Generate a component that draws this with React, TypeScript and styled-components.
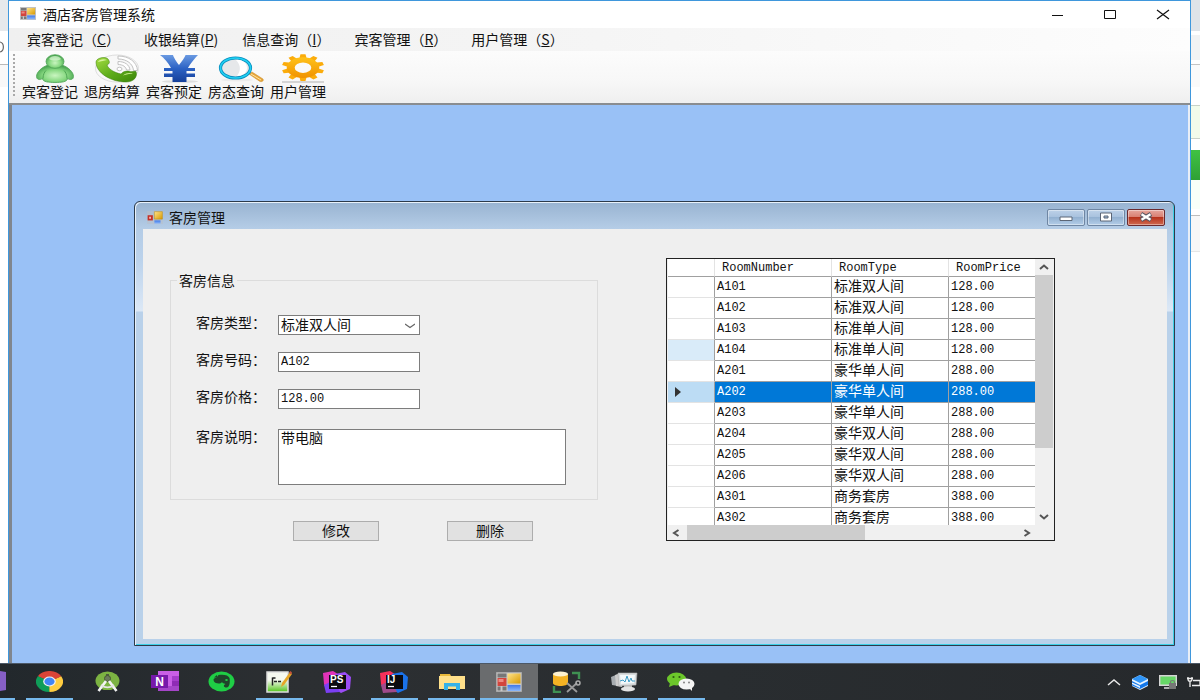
import React from "react";
import styled, { createGlobalStyle, css } from "styled-components";

const ui = `"Noto Sans CJK SC", "Noto Sans", sans-serif`;
const mono = `"Liberation Mono", "Noto Sans CJK SC", monospace`;

const GlobalStyle = createGlobalStyle`
  *, *::before, *::after { box-sizing: border-box; }
  body { margin: 0; font-family: ${ui}; font-size: 14px; line-height: 16px; color: #111; }
  button, input, select, textarea { font: inherit; color: inherit; margin: 0; }
  button { cursor: default; }
  svg { display: block; flex: none; }
`;

/* ---------- desktop ---------- */

const Screen = styled.div`
  display: flex;
  flex-direction: column;
  min-height: 100vh;
  background: #fff;
`;

const Desktop = styled.div`
  display: flex;
  flex: 1;
`;

const LeftSliver = styled.div`
  width: 8px;
  padding-top: 40px;
  background: linear-gradient(
    #e6e9ec 0 31px, #fff 31px 64px, #b9b9b9 64px 65px, #f8f8f8 65px 87px, #fff 87px
  );
`;

const RightSliver = styled.div`
  width: 9px;
  background: linear-gradient(
    #dfe3e8 0 31px, #fff 31px 35px, #f1f2f3 35px 60px, #fff 60px 64px, #c4c4c4 64px 65px,
    #fafafa 65px 87px, #fff 87px 105px, #c8d2c8 105px 106px, #f2fbea 106px 138px, #c8d2c8 138px 139px,
    #fff 139px 150px, #3fc043 150px 152px, #2fa035 180px, #f8fff8 180px 209px, #fff 209px 215px,
    #bdbdbd 215px 216px, #f7f7f7 216px 251px, #e6e6e6 251px 252px, #fff 252px
  );
`;

/* ---------- main window ---------- */

const MainWindow = styled.main`
  display: flex;
  flex-direction: column;
  flex: 1;
  min-width: 0;
  background: #fff;
  border: solid #3f97dc;
  border-width: 1px 1px 0;
`;

const TitleBar = styled.header`
  display: flex;
  align-items: center;
  height: 27px;
  padding: 0 20px 2px 11px;
  gap: 7px;
`;

const Title = styled.h1`
  flex: 1;
  margin: 0;
  font-size: 14px;
  line-height: 20px;
  font-weight: 400;
`;

const CaptionButtons = styled.div`
  display: flex;
  gap: 39px;
`;

const CaptionButton = styled.button`
  display: flex;
  padding: 0;
  border: 0;
  background: none;
`;

const MenuBar = styled.nav`
  display: flex;
  align-items: center;
  height: 23px;
  gap: 24px;
  padding: 0 0 2px 18px;
  background: linear-gradient(90deg, #f0f0f0, #f5f5f5 50%, #fdfdfd);
`;

const MenuItem = styled.button`
  padding: 0;
  border: 0;
  background: none;
  white-space: nowrap;
`;

const ToolBar = styled.div`
  display: flex;
  height: 54px;
  gap: 6px;
  padding: 3px 0 0 4px;
  background: linear-gradient(#fcfcfc, #f7f7f7 60%, #efefef);
  border-bottom: 2px solid #8a8d90;
`;

const Grip = styled.div`
  width: 3px;
  height: 43px;
  background: repeating-linear-gradient(#a9a9a9 0 2px, transparent 2px 4px);
  background-size: 2px 100%;
  background-repeat: no-repeat;
`;

const ToolButton = styled.button`
  display: flex;
  flex-direction: column;
  align-items: center;
  padding: 0;
  border: 0;
  background: none;
  white-space: nowrap;
  svg { margin-left: 10px; }
`;

const ClientArea = styled.div`
  display: flex;
  flex: 1;
  padding: 96px 13px 17px 122px;
  background: #99c1f6;
  border-left: 3px solid #80868e;
  border-right: 2px solid #e9eef6;
`;

/* ---------- child window ---------- */

const ChildWindow = styled.section`
  display: flex;
  flex-direction: column;
  flex: 1;
  min-width: 0;
  padding: 0 7px 6px 8px;
  border: 1px solid #2c3a4a;
  border-radius: 6px 6px 0 0;
  background: linear-gradient(#98b3d1 0, #b4cce6 26px, #bcd3ec 60px, #dce8f6 109px, #b9d1ea 110px);
  box-shadow: inset 1px 1px 0 #e8f1fa, inset -1px -1px 0 #3ccfe6;
`;

const ChildTitleBar = styled.header`
  display: flex;
  align-items: center;
  height: 27px;
  gap: 6px;
  padding: 3px 2px 0 4px;
`;

const ChildTitle = styled.h2`
  flex: 1;
  margin: 0;
  font-size: 14px;
  line-height: 16px;
  font-weight: 400;
`;

const AeroButtons = styled.div`
  display: flex;
  gap: 2px;
`;

const AeroButton = styled.button<{ $close?: boolean }>`
  display: flex;
  align-items: center;
  justify-content: center;
  width: 38px;
  height: 17px;
  padding: 0;
  border: 1px solid #6f86a3;
  border-radius: 2px;
  box-shadow: inset 0 0 0 1px rgba(255, 255, 255, 0.4);
  background: linear-gradient(#bdd1e8, #a9c2de 45%, #93b1d1 50%, #b3cde8);
  ${(p) =>
    p.$close &&
    css`
      border-color: #6b2a2e;
      background: linear-gradient(#e6a79d, #d98173 45%, #b8341d 50%, #cf6a50);
    `}
`;

const Form = styled.form`
  display: flex;
  flex: 1;
  align-items: flex-start;
  gap: 68px;
  padding: 29px 27px 0;
  background: #efefef;
`;

const Editor = styled.div`
  display: flex;
  flex-direction: column;
  flex: 0 0 428px;
  gap: 21px;
  padding-top: 14px;
`;

const Group = styled.fieldset`
  display: flex;
  flex-direction: column;
  gap: 17px;
  height: 228px;
  margin: 0;
  padding: 27px 25px 0;
  border: 1px solid #dcdcdc;
  min-width: 0;
`;

const Legend = styled.legend`
  margin-left: -19px;
  padding: 0 2px;
`;

const Field = styled.div<{ $tall?: boolean }>`
  display: flex;
  align-items: flex-start;
  gap: 12px;
  padding-top: ${(p) => (p.$tall ? 3 : 0)}px;
`;

const Label = styled.label`
  flex: 0 0 70px;
  line-height: 14px;
  white-space: nowrap;
`;

const boxed = css`
  border: 1px solid #7d7d7d;
  border-radius: 0;
  background: #fff;
  outline: 0;
`;

const TextBox = styled.input`
  ${boxed}
  width: 142px;
  height: 20px;
  padding: 0 2px;
  font-family: ${mono};
  font-size: 12px;
`;

const SelectBox = styled.div`
  position: relative;
  width: 142px;
  svg {
    position: absolute;
    right: 5px;
    top: 8px;
    pointer-events: none;
  }
`;

const Select = styled.select`
  ${boxed}
  display: block;
  width: 100%;
  height: 20px;
  padding: 0 2px 2px;
  line-height: 16px;
  appearance: none;
`;

const Notes = styled.textarea`
  ${boxed}
  width: 288px;
  height: 56px;
  padding: 0 2px;
  line-height: 14px;
  resize: none;
`;

const Actions = styled.div`
  display: flex;
  gap: 68px;
  padding-left: 123px;
`;

const ActionButton = styled.button`
  width: 86px;
  height: 20px;
  padding: 0 0 2px;
  border: 1px solid #adadad;
  background: #e1e1e1;
  line-height: 16px;
`;

/* ---------- data grid ---------- */

const GridFrame = styled.div`
  display: grid;
  grid-template-columns: 1fr 18px;
  grid-template-rows: 266px 15px;
  flex: 0 0 389px;
  padding: 0 1px;
  border: 1px solid #222;
  background: #f0f0f0;
`;

const Viewport = styled.div`
  overflow: hidden;
  background: #fff;
`;

const Table = styled.table`
  width: 100%;
  table-layout: fixed;
  border-collapse: separate;
  border-spacing: 0;
  font-family: ${mono};
`;

const HeadCell = styled.th<{ $w?: number }>`
  width: ${(p) => (p.$w ? `${p.$w}px` : "auto")};
  height: 18px;
  padding: 0 0 0 7px;
  border-right: 1px solid #e3e3e3;
  border-bottom: 1px solid #a0a0a0;
  font-size: 12px;
  line-height: 16px;
  font-weight: 400;
  text-align: left;
  &:last-child { border-right: 0; }
`;

const RowHead = styled.th<{ $tint: string }>`
  height: 21px;
  padding: 0 0 0 6px;
  border-right: 1px solid #a0a0a0;
  border-bottom: 1px solid #e3e3e3;
  background: ${(p) => p.$tint};
`;

const Cell = styled.td<{ $selected: boolean; $wide?: boolean }>`
  height: 21px;
  padding: 0 0 0 2px;
  border-right: 1px solid #a0a0a0;
  border-bottom: 1px solid #a0a0a0;
  font-size: ${(p) => (p.$wide ? 14 : 12)}px;
  line-height: 16px;
  white-space: nowrap;
  color: ${(p) => (p.$selected ? "#fff" : "#111")};
  background: ${(p) => (p.$selected ? "#0078d7" : "#fff")};
  &:last-child { border-right: 0; }
`;

const ScrollBar = styled.div<{ $across?: boolean }>`
  display: flex;
  flex-direction: ${(p) => (p.$across ? "row" : "column")};
  justify-content: space-between;
  background: #f0f0f0;
`;

const ScrollButton = styled.button`
  display: flex;
  align-items: center;
  justify-content: center;
  flex: 0 0 16px;
  padding: 0;
  border: 0;
  background: none;
`;

const Track = styled.div`
  flex: 1;
`;

const Thumb = styled.div<{ $across?: boolean }>`
  width: ${(p) => (p.$across ? "53%" : "100%")};
  height: ${(p) => (p.$across ? "100%" : "74%")};
  margin-left: ${(p) => (p.$across ? 3 : 0)}px;
  background: #cdcdcd;
`;

/* ---------- task bar ---------- */

const TaskBar = styled.footer`
  display: flex;
  height: 37px;
  border-top: 1px solid #4c5866;
  background: linear-gradient(90deg, #22282c, #2c2f32 25%, #292d30 60%, #26292c);
`;

const CutTask = styled.div`
  display: flex;
  align-items: center;
  width: 15px;
  margin-right: 6px;
  border-bottom: 2px solid #76b9ed;
`;

const Tasks = styled.div`
  display: flex;
  flex: 0 0 689px;
`;

const Task = styled.button<{ $open?: boolean; $active?: boolean }>`
  display: flex;
  flex: 1;
  align-items: center;
  justify-content: center;
  padding: 0 0 1px;
  border: 0;
  background: ${(p) => (p.$active ? "#6a6c6e" : "none")};
  background-image: ${(p) => (p.$open || p.$active ? "linear-gradient(#76b9ed, #76b9ed)" : "none")};
  background-repeat: no-repeat;
  background-position: center bottom;
  background-size: ${(p) => (p.$active ? "100%" : "47px")} 2px;
`;

const Tray = styled.div`
  display: flex;
  flex: 1;
  align-items: center;
  justify-content: flex-end;
  gap: 10px;
  overflow: hidden;
`;

/* ---------- drawings ---------- */

const FormIcon = ({ w = 16, h = 13, frame = true }: { w?: number; h?: number; frame?: boolean }) => (
  <svg width={w} height={h} viewBox="0 0 26 20" preserveAspectRatio="none" aria-hidden="true">
    <defs>
      <linearGradient id="fy" x1="0" y1="0" x2="1" y2="1"><stop offset="0" stopColor="#ffe38a" /><stop offset="1" stopColor="#d89a00" /></linearGradient>
      <linearGradient id="fb" x1="0" y1="0" x2="0" y2="1"><stop offset="0" stopColor="#3f78e8" /><stop offset="1" stopColor="#8cb8fa" /></linearGradient>
    </defs>
    {frame ? (
      <>
        <path d="M.5.5h25v19H.5z" fill="#c9c9c9" stroke="#aaa" />
        <path d="M1.500 1.500h9v4h-9zM1.500 14.500h3v4h-3zM6.500 14.500h4v4h-4z" fill="#777" />
        <path d="M1.500 6h9v8h-9z" fill="#d2453d" /><path d="M2.500 7h5v3h-5z" fill="#ec8a82" />
        <path d="M11.500 1.500h13v10h-13z" fill="url(#fy)" />
        <path d="M11.500 13h13v6h-13z" fill="url(#fb)" />
      </>
    ) : (
      <>
        <path d="M0 0h26v20H0z" fill="#b9bfc9" opacity=".6" />
        <path d="M1 6.500h8.500v8H1z" fill="#c42f27" /><path d="M3.500 9h3v3h-3z" fill="#f7b8b2" />
        <path d="M12 1h13v11.500H12z" fill="url(#fy)" stroke="#b98a10" strokeWidth=".8" />
        <path d="M12 14.500h10v5H12z" fill="url(#fb)" />
      </>
    )}
  </svg>
);

const GuestIcon = () => (
  <svg width="40" height="29" viewBox="0 0 40 29" aria-hidden="true">
    <defs><radialGradient id="gg" cx=".5" cy=".6" r=".6"><stop offset="0" stopColor="#c9f5c0" /><stop offset=".55" stopColor="#86d880" /><stop offset="1" stopColor="#3f9a48" /></radialGradient></defs>
    <path d="M13 11C7 13 1.500 18 1.500 22.500c0 3 3 4 6 2C7.500 28 14 28.500 20 28.500s12.500-.5 12.500-4c3 2 6 1 6-2C38.500 18 33 13 27 11z" fill="url(#gg)" stroke="#4fa455" strokeWidth=".8" />
    <path d="M8 24.500c0-4 1.500-6.500 3-8M32 24.500c0-4-1.500-6.500-3-8" fill="none" stroke="#4fa455" />
    <ellipse cx="20" cy="7.500" rx="9" ry="6.800" fill="url(#gg)" stroke="#4fa455" strokeWidth=".8" />
    <path d="M14 5c2-4 10-4 12 0-3 2-9 2-12 0z" fill="#e9fce4" opacity=".6" />
  </svg>
);

const PhoneIcon = () => (
  <svg width="46" height="29" viewBox="0 0 46 29" aria-hidden="true">
    <defs><linearGradient id="pg" x1="0" y1="0" x2="1" y2="1"><stop offset="0" stopColor="#a4dc42" /><stop offset=".5" stopColor="#5fae1b" /><stop offset="1" stopColor="#3c8509" /></linearGradient></defs>
    <ellipse cx="23" cy="14.500" rx="21.500" ry="13.500" fill="#f8f8f8" stroke="#dedede" />
    <g fill="none" stroke="#c2c2c2" strokeWidth="1">
      <path d="M24 2c11 0 19 6 19.500 14.500h-4C39 10 33 5 24 5z" fill="#fff" />
      <path d="M24 7.500c7 0 11.500 3.500 12 8.500h-3.500c-.5-3-3.500-5.500-8.500-5.500z" fill="#fff" />
      <ellipse cx="25.500" cy="15" rx="2.500" ry="1.800" fill="#fff" />
    </g>
    <path d="M2 8c0-4 9-6 12-3 2 3 2 4.500-1 6 1.500 4 7 7.500 14 9 2-2.500 5-3.500 9-2.500 1 .5 3-.5 6 0 2 5-2 10.500-10 10.500C17 28 2 19 2 8z" fill="url(#pg)" stroke="#397d0c" strokeWidth=".5" />
    <path d="M4 8c1-3 6-3.500 9-2-3 .5-6 1.500-9 2zM29 21.500c3-2.500 7-3 10-2-4 0-7 1-10 2z" fill="#d6f39a" />
  </svg>
);

const YenIcon = () => (
  <svg width="40" height="29" viewBox="0 0 40 29" aria-hidden="true">
    <defs><linearGradient id="yb" x1="0" y1="0" x2="0" y2="1"><stop offset="0" stopColor="#6a9ae2" /><stop offset=".5" stopColor="#2c62c4" /><stop offset="1" stopColor="#16409a" /></linearGradient></defs>
    <ellipse cx="21" cy="27.500" rx="18" ry="1.300" fill="#ddd" />
    <path d="M1 1h13c.5 2 3.500 7 6 10C22.500 8 26 3 26.500 1H39c-3 3-8 9-10 13h7v3h-8.500v2.500H36v3.500h-8.500v5h-14v-5H5v-3.500h8.500V17H5v-3h7C9.500 9 5 4 1 1z" fill="url(#yb)" />
  </svg>
);

const SearchIcon = () => (
  <svg width="46" height="29" viewBox="0 0 46 29" aria-hidden="true">
    <ellipse cx="19" cy="26" rx="16" ry="1.500" fill="#ececec" />
    <path d="m31 20 3-2 11 7c1 2-1 3-3 2.500z" fill="#e6a63a" stroke="#c98a26" strokeWidth=".5" />
    <path d="m33 20 10 6" stroke="#ffe2a0" />
    <ellipse cx="17.500" cy="14" rx="15" ry="10" fill="#e6e8ea" stroke="#0a8fc0" strokeWidth="3.200" />
    <ellipse cx="17.500" cy="14" rx="15" ry="10" fill="none" stroke="#1fd0f2" strokeWidth="1.600" />
    <path d="M18 6c6-1 11 3 11 8s-5 8-10 8c4-5 4-11-1-16z" fill="#fff" />
  </svg>
);

const gearTeeth = Array.from({ length: 10 }, (_, i) => i * 36);
const GearIcon = () => (
  <svg width="44" height="29" viewBox="0 0 44 31" preserveAspectRatio="none" aria-hidden="true">
    <defs><linearGradient id="go" x1="0" y1="0" x2="0" y2="1"><stop offset="0" stopColor="#ffc21a" /><stop offset="1" stopColor="#f09200" /></linearGradient></defs>
    <path d="M1 30h42" stroke="#c9c9c9" strokeWidth="1.500" />
    <g transform="translate(22 14.600) scale(1.480 1)" fill="url(#go)">
      {gearTeeth.map((a) => <path key={a} d="M-2.600-9-1.700-14.300h3.400l.9 5.300z" transform={`rotate(${a})`} fill="#fbac0b" />)}
      <path fillRule="evenodd" d="M0-11a11 11 0 1 0 0 22a11 11 0 1 0 0-22zM0-5.600a5.600 5.600 0 1 1 0 11.200a5.600 5.600 0 1 1 0-11.200z" />
    </g>
  </svg>
);

const Chevron = ({ dir }: { dir: "up" | "down" | "left" | "right" }) => {
  const d = { up: "M1 7 5 3.500 9 7", down: "M1 3 5 6.500 9 3", left: "M7.500 2 3 5l4.500 3", right: "M2.500 2 7 5 2.500 8" }[dir];
  return (
    <svg width="10" height="10" viewBox="0 0 10 10" aria-hidden="true"><path d={d} fill="none" stroke="#555" strokeWidth="2" /></svg>
  );
};

const ChromeIcon = () => (
  <svg width="27" height="21" viewBox="0 0 24 24" preserveAspectRatio="none" aria-hidden="true">
    <path d="M12 12 1.600 6A12 12 0 0 1 22.400 6z" fill="#db4437" />
    <path d="M12 12 22.400 6A12 12 0 0 1 12 24z" fill="#ffcd40" />
    <path d="M12 12v12A12 12 0 0 1 1.600 6z" fill="#0f9d58" />
    <path d="M12 6h10.400L12 12z" fill="#db4437" />
    <path d="M6.800 15 1.600 6 12 12z" fill="#0f9d58" /><path d="M17.200 15 12 24v-12z" fill="#ffcd40" />
    <circle cx="12" cy="12" r="5.600" fill="#f1f1f1" /><circle cx="12" cy="12" r="4.500" fill="#4285f4" />
  </svg>
);

const AndroidStudioIcon = () => (
  <svg width="25" height="21" viewBox="0 0 25 21" aria-hidden="true">
    <ellipse cx="12.500" cy="9.800" rx="12" ry="9.300" fill="#7cb342" />
    <path d="M12.500 3v4" stroke="#4b5a40" strokeWidth="3" />
    <circle cx="12.500" cy="7.500" r="3" fill="#6b7a5c" stroke="#455a30" />
    <path d="m11 10-7.500 10M14 10l7.500 10" stroke="#f3f3f3" strokeWidth="2.600" />
    <path d="M6 14c4 3 9 3 13 0" fill="none" stroke="#e4e4e4" strokeWidth="1.800" />
  </svg>
);

const OneNoteIcon = () => (
  <svg width="28" height="21" viewBox="0 0 28 21" aria-hidden="true">
    <path d="M7 0h21v20H7z" fill="#c95fe6" /><path d="M21 5h7v5h-7z" fill="#a63dcb" /><path d="M21 10h7v5h-7z" fill="#8f2bb5" /><path d="M7 15h21v5H7z" fill="#a545c9" />
    <path d="M0 4h17v13H0z" fill="#7719aa" />
    <text x="8.500" y="14.500" textAnchor="middle" fontFamily="Liberation Sans, sans-serif" fontWeight="700" fontSize="12" fill="#fff">N</text>
  </svg>
);

const EvernoteIcon = () => (
  <svg width="27" height="21" viewBox="0 0 27 21" aria-hidden="true">
    <ellipse cx="13.500" cy="10.500" rx="13" ry="10" fill="#1fce45" />
    <path d="M5.500 9c0-1.500 1-2 3-2.500L10.500 4c5-1 10 0 11 3 .7 3 .5 9.500-3 9.500-3 0-3.500-2.500-1-3.500-2-.5-3-1-3.500-2-1.500 2.500-7 1.500-8-.5z" fill="#20432a" />
    <path d="M6 6.500 9 4v2.500z" fill="#20432a" /><ellipse cx="18.500" cy="9" rx="1.300" ry="1" fill="#1fce45" />
  </svg>
);

const EditorIcon = () => (
  <svg width="26" height="22" viewBox="0 0 26 22" aria-hidden="true">
    <defs><linearGradient id="eg" x1="0" y1="0" x2="0" y2="1"><stop offset=".4" stopColor="#f6f9f0" /><stop offset="1" stopColor="#52c41a" /></linearGradient></defs>
    <path d="M1 1h21v20H1z" fill="url(#eg)" stroke="#dedede" strokeWidth="1.500" />
    <path d="M6.500 6.500v8M6.500 7h3M8 10.500h3M12 10.500h3" stroke="#222" strokeWidth="1.500" />
    <path d="m15 16 1-4 8-11 2 2-8 11z" fill="#e6a626" /><path d="m23 2 1.500-2L26 1.500 25 3.500z" fill="#c4523a" />
  </svg>
);

const JetIcon = ({ name, a, b, c }: { name: string; a: string; b: string; c: string }) => (
  <svg width="28" height="22" viewBox="0 0 28 22" aria-hidden="true">
    <path d="M0 2 10 0l8 5-4 14-10 2-3-8z" fill={a} />
    <path d="M12 3 22 1l6 5-1 12-9 4-8-5z" fill={b} />
    <path d="m1 14 10-5 6 12-14 1z" fill={c} />
    <path d="M6 4h17v14H6z" fill="#0b0b0f" />
    <text x="7" y="12" fontFamily="Liberation Sans, sans-serif" fontWeight="700" fontSize="10" fill="#fff">{name}</text>
    <path d="M8 15.500h6" stroke="#fff" strokeWidth="1.300" />
  </svg>
);

const FolderIcon = () => (
  <svg width="26" height="18" viewBox="0 0 26 18" aria-hidden="true">
    <path d="M1 1h10l1 2h13v4H1z" fill="#e9b93c" /><path d="M0 3h26v13H0z" fill="#ffe08a" />
    <path d="M5 10h16v7h-4v-3.500H9V17H5z" fill="#35b2e8" />
  </svg>
);

const DatabaseIcon = () => (
  <svg width="29" height="22" viewBox="0 0 29 22" aria-hidden="true">
    <path d="M1 3v9c0 4 15 4 15 0V3z" fill="#f4b223" /><ellipse cx="8.500" cy="3" rx="7.500" ry="2.600" fill="#fdf1cf" />
    <path d="M20 2h7v6M2 15v6h7" fill="none" stroke="#3f9152" strokeWidth="2.400" />
    <path d="m15 12 10 9M25 12l-10 9" stroke="#9a9a9a" strokeWidth="1.800" /><circle cx="26" cy="12" r="2" fill="none" stroke="#aaa" strokeWidth="1.500" />
  </svg>
);

const MonitorIcon = () => (
  <svg width="28" height="20" viewBox="0 0 28 20" aria-hidden="true">
    <path d="M1 5 8 2v12l-6-1z" fill="#a8adb1" /><path d="M5 3l7-2v14l-6-1z" fill="#ccc" />
    <path d="M8 1h19l-1 12-17 1z" fill="#d8dcde" stroke="#aaa" strokeWidth=".6" /><path d="M10 3h15l-1 8-13 1z" fill="#f3f8fa" />
    <path d="M14 13h8v4h-8z" fill="#bbb" />
    <path d="m10 9 3-1 2 2 2-6 2 6 2-4 1 3h3" fill="none" stroke="#3d9cc7" />
    <ellipse cx="18" cy="17" rx="7" ry="2.500" fill="#e4e4e4" />
  </svg>
);

const WeChatIcon = () => (
  <svg width="28" height="19" viewBox="0 0 28 19" aria-hidden="true">
    <ellipse cx="9.500" cy="7" rx="9.500" ry="6.500" fill="#6cc72b" /><path d="m3 11-1 4 5-2z" fill="#6cc72b" />
    <ellipse cx="19.500" cy="12" rx="8" ry="5.500" fill="#f4f4f4" /><path d="m22 16 3 3v-4z" fill="#f4f4f4" />
    <g fill="#2c5a13"><circle cx="6.500" cy="5" r="1.100" /><circle cx="12.500" cy="5" r="1.100" /></g>
    <g fill="#777"><circle cx="17" cy="10.500" r=".9" /><circle cx="22" cy="10.500" r=".9" /></g>
  </svg>
);

const menus = [
  ["宾客登记（", "C", "）"],
  ["收银结算(", "P", ")"],
  ["信息查询（", "I", "）"],
  ["宾客管理（", "R", "）"],
  ["用户管理（", "S", "）"],
];

const tools: [string, React.ReactNode][] = [
  ["宾客登记", <GuestIcon />],
  ["退房结算", <PhoneIcon />],
  ["宾客预定", <YenIcon />],
  ["房态查询", <SearchIcon />],
  ["用户管理", <GearIcon />],
];

const rooms = [
  ["A101", "标准双人间", "128.00"],
  ["A102", "标准双人间", "128.00"],
  ["A103", "标准单人间", "128.00"],
  ["A104", "标准单人间", "128.00"],
  ["A201", "豪华单人间", "288.00"],
  ["A202", "豪华单人间", "288.00"],
  ["A203", "豪华单人间", "288.00"],
  ["A204", "豪华双人间", "288.00"],
  ["A205", "豪华双人间", "288.00"],
  ["A206", "豪华双人间", "288.00"],
  ["A301", "商务套房", "388.00"],
  ["A302", "商务套房", "388.00"],
];

const tasks: { name: string; icon: React.ReactNode; open?: boolean; active?: boolean }[] = [
  { name: "Chrome", icon: <ChromeIcon />, open: true },
  { name: "Android Studio", icon: <AndroidStudioIcon /> },
  { name: "OneNote", icon: <OneNoteIcon /> },
  { name: "Evernote", icon: <EvernoteIcon /> },
  { name: "Editor", icon: <EditorIcon />, open: true },
  { name: "PhpStorm", icon: <JetIcon name="PS" a="#e033b8" b="#9b4cf5" c="#7b3ff2" /> },
  { name: "IntelliJ IDEA", icon: <JetIcon name="IJ" a="#f5315b" b="#1a72ea" c="#a04a8c" />, open: true },
  { name: "Explorer", icon: <FolderIcon />, open: true },
  { name: "Hotel", icon: <FormIcon w={26} h={20} />, active: true },
  { name: "Database", icon: <DatabaseIcon />, open: true },
  { name: "Monitor", icon: <MonitorIcon />, open: true },
  { name: "WeChat", icon: <WeChatIcon />, open: true },
];

const selectedRoom = "A202";
const tintOf = (room: string) =>
  room === selectedRoom ? "#bcdcf4" : room === "A104" ? "#d9ebf9" : "#fff";

export default function App() {
  return (
    <Screen>
      <GlobalStyle />
      <Desktop>
        <LeftSliver>
          <svg width="8" height="14" viewBox="0 0 8 14" aria-hidden="true"><path d="M0 2c4.500 1 4.500 9 0 10" fill="none" stroke="#666" strokeWidth="1.200" /></svg>
        </LeftSliver>
        <MainWindow>
          <TitleBar>
            <FormIcon />
            <Title>酒店客房管理系统</Title>
            <CaptionButtons>
              <CaptionButton aria-label="最小化">
                <svg width="13" height="12" viewBox="0 0 13 12"><path d="M1 7.500h11" stroke="#111" /></svg>
              </CaptionButton>
              <CaptionButton aria-label="最大化">
                <svg width="14" height="12" viewBox="0 0 14 12"><path d="M1.500 2.500h11v8h-11z" fill="none" stroke="#111" /></svg>
              </CaptionButton>
              <CaptionButton aria-label="关闭">
                <svg width="14" height="12" viewBox="0 0 14 12"><path d="m1 2 12 9M13 2 1 11" stroke="#111" strokeWidth="1.200" /></svg>
              </CaptionButton>
            </CaptionButtons>
          </TitleBar>
          <MenuBar>
            {menus.map(([before, key, after]) => (
              <MenuItem key={key}>{before}<u>{key}</u>{after}</MenuItem>
            ))}
          </MenuBar>
          <ToolBar>
            <Grip />
            {tools.map(([name, icon]) => (
              <ToolButton key={name}>{icon}{name}</ToolButton>
            ))}
          </ToolBar>
          <ClientArea>
            <ChildWindow>
              <ChildTitleBar>
                <FormIcon frame={false} />
                <ChildTitle>客房管理</ChildTitle>
                <AeroButtons>
                  <AeroButton aria-label="最小化">
                    <svg width="14" height="12" viewBox="0 0 14 12"><path d="M1 6h12v3.500H1z" fill="#fff" stroke="#5c6676" /></svg>
                  </AeroButton>
                  <AeroButton aria-label="最大化">
                    <svg width="14" height="12" viewBox="0 0 14 12"><path fillRule="evenodd" d="M1.500 2h11v8h-11zM5 5h4v2H5z" fill="#fff" stroke="#5c6676" /></svg>
                  </AeroButton>
                  <AeroButton $close aria-label="关闭">
                    <svg width="14" height="12" viewBox="0 0 14 12"><path d="m2 3 10 6M12 3 2 9" stroke="#5c5a66" strokeWidth="4.400" /><path d="m2.500 3.300 9 5.400M11.500 3.300l-9 5.400" stroke="#fff" strokeWidth="2.400" /></svg>
                  </AeroButton>
                </AeroButtons>
              </ChildTitleBar>
              <Form onSubmit={(e) => e.preventDefault()}>
                <Editor>
                  <Group>
                    <Legend>客房信息</Legend>
                    <Field>
                      <Label htmlFor="type">客房类型：</Label>
                      <SelectBox>
                        <Select id="type" defaultValue="标准双人间">
                          <option>标准双人间</option>
                          <option>标准单人间</option>
                          <option>豪华单人间</option>
                          <option>豪华双人间</option>
                          <option>商务套房</option>
                        </Select>
                        <svg width="10" height="6" viewBox="0 0 10 6"><path d="m0 1 5 3.500L10 1" fill="none" stroke="#666" strokeWidth="1.200" /></svg>
                      </SelectBox>
                    </Field>
                    <Field>
                      <Label htmlFor="number">客房号码：</Label>
                      <TextBox id="number" defaultValue="A102" />
                    </Field>
                    <Field>
                      <Label htmlFor="price">客房价格：</Label>
                      <TextBox id="price" defaultValue="128.00" />
                    </Field>
                    <Field $tall>
                      <Label htmlFor="notes">客房说明：</Label>
                      <Notes id="notes" defaultValue="带电脑" />
                    </Field>
                  </Group>
                  <Actions>
                    <ActionButton type="button">修改</ActionButton>
                    <ActionButton type="button">删除</ActionButton>
                  </Actions>
                </Editor>
                <GridFrame>
                  <Viewport>
                    <Table>
                      <thead>
                        <tr>
                          <HeadCell $w={47} />
                          <HeadCell $w={117}>RoomNumber</HeadCell>
                          <HeadCell $w={117}>RoomType</HeadCell>
                          <HeadCell>RoomPrice</HeadCell>
                        </tr>
                      </thead>
                      <tbody>
                        {rooms.map(([room, type, price]) => {
                          const selected = room === selectedRoom;
                          return (
                            <tr key={room}>
                              <RowHead scope="row" $tint={tintOf(room)}>
                                {selected && <svg width="8" height="10" viewBox="0 0 8 10"><path d="M1 0l6 5-6 5z" fill="#333" /></svg>}
                              </RowHead>
                              <Cell $selected={selected}>{room}</Cell>
                              <Cell $selected={selected} $wide>{type}</Cell>
                              <Cell $selected={selected}>{price}</Cell>
                            </tr>
                          );
                        })}
                      </tbody>
                    </Table>
                  </Viewport>
                  <ScrollBar>
                    <ScrollButton type="button" aria-label="向上滚动"><Chevron dir="up" /></ScrollButton>
                    <Track><Thumb /></Track>
                    <ScrollButton type="button" aria-label="向下滚动"><Chevron dir="down" /></ScrollButton>
                  </ScrollBar>
                  <ScrollBar $across>
                    <ScrollButton type="button" aria-label="向左滚动"><Chevron dir="left" /></ScrollButton>
                    <Track><Thumb $across /></Track>
                    <ScrollButton type="button" aria-label="向右滚动"><Chevron dir="right" /></ScrollButton>
                  </ScrollBar>
                </GridFrame>
              </Form>
            </ChildWindow>
          </ClientArea>
        </MainWindow>
        <RightSliver />
      </Desktop>
      <TaskBar>
        <CutTask>
          <svg width="6" height="20" viewBox="0 0 6 20"><path d="M0 0l6 1v18l-6 1z" fill="#865fc5" /></svg>
        </CutTask>
        <Tasks>
          {tasks.map((t) => (
            <Task key={t.name} aria-label={t.name} $open={t.open} $active={t.active}>{t.icon}</Task>
          ))}
        </Tasks>
        <Tray>
          <svg width="14" height="8" viewBox="0 0 14 8"><path d="m1 7 6-5 6 5" fill="none" stroke="#e8e8e8" strokeWidth="1.500" /></svg>
          <svg width="18" height="15" viewBox="0 0 18 15">
            <path d="M1 4 9 0l8 4v7l-8 4-8-4z" fill="#e8f3ff" /><path d="m1 4 8-4 8 4-8 4z" fill="#2f95f7" /><path d="m9 10 8-4v4l-8 4z" fill="#1477e8" /><path d="m1 6 8 4v1L1 7.500zM1 9l8 4v1l-8-3.500z" fill="#1477e8" />
          </svg>
          <svg width="18" height="14" viewBox="0 0 18 14">
            <path d="M.7.700h16.600v9.600H.7z" fill="#67d867" stroke="#d5d5d5" strokeWidth="1.400" /><path d="M5 13h7" stroke="#ddd" strokeWidth="1.500" />
            <path d="M10 8h7v6h-7z" fill="#777" /><path d="M11.500 8V7c0-2 4-2 4 0v1" fill="none" stroke="#777" strokeWidth="1.200" />
          </svg>
          <svg width="13" height="12" viewBox="0 0 13 12">
            <path d="M1 1v2c0 3 4 3 4 0V1M3 6v5M0 2.500h6" fill="none" stroke="#eee" strokeWidth="1.300" /><path d="M6 4.500h7v5H5" fill="none" stroke="#eee" strokeWidth="1.300" />
          </svg>
        </Tray>
      </TaskBar>
    </Screen>
  );
}
